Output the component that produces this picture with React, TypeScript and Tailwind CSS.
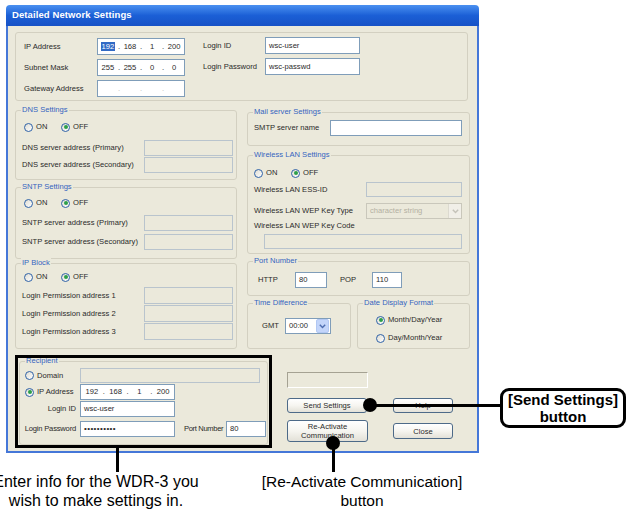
import React from 'react';

interface BoxProps {
  className?: string;
  disabled?: boolean;
  children?: React.ReactNode;
}

const Box = ({ className = '', disabled = false, children }: BoxProps) => (
  <div
    className={`flex items-center px-[3px] border whitespace-nowrap overflow-hidden ${
      disabled ? 'bg-[#ebe9db] border-[#b9c4cd]' : 'bg-white border-[#7f9db9]'
    } ${className}`}
  >
    {children}
  </div>
);

const IpBox = ({ parts, className = '', selectFirst = false, faint = false }: { parts: string[]; className?: string; selectFirst?: boolean; faint?: boolean }) => (
  <div className={`flex items-center bg-white border border-[#7f9db9] ${faint ? 'text-[#b8b8b8]' : ''} ${className}`}>
    {parts.map((p, i) => (
      <React.Fragment key={i}>
        {i > 0 && <span>.</span>}
        <span className="flex-1 text-center">
          <span className={i === 0 && selectFirst ? 'bg-[#316ac5] text-white px-[1px]' : ''}>{p}</span>
        </span>
      </React.Fragment>
    ))}
  </div>
);

const Radio = ({ checked = false, label, className = '' }: { checked?: boolean; label: string; className?: string }) => (
  <div className={`flex items-center gap-[3px] h-[10px] ${className}`}>
    <span className="w-[9px] h-[9px] shrink-0 rounded-full border border-[#2f62a8] bg-gradient-to-br from-[#dedcd2] to-white flex items-center justify-center">
      {checked && <span className="w-[4px] h-[4px] rounded-full bg-[#2c9f4a]" />}
    </span>
    <span>{label}</span>
  </div>
);

const Group = ({ title, className = '', children }: { title?: string; className?: string; children?: React.ReactNode }) => (
  <div className={`relative border border-[#d3d0c1] rounded-[3px] ${className}`}>
    {title && (
      <span className="absolute left-[5px] top-[-6px] px-[1px] bg-[#ebe9db] text-[#3564c0] leading-[10px] whitespace-nowrap">
        {title}
      </span>
    )}
    {children}
  </div>
);

const Btn = ({ className = '', children }: { className?: string; children?: React.ReactNode }) => (
  <div
    className={`flex items-center justify-center text-center leading-[9px] border border-[#4d6a88] rounded-[3px] bg-gradient-to-b from-white via-[#f6f5f0] to-[#e3e1d8] ${className}`}
  >
    {children}
  </div>
);

const Chevron = ({ color }: { color: string }) => (
  <svg width="7" height="5" viewBox="0 0 7 5">
    <path d="M0.8 0.8 L3.5 3.6 L6.2 0.8" fill="none" stroke={color} strokeWidth="1.4" />
  </svg>
);

const OnOff = () => (
  <div className="flex">
    <Radio label="ON" className="w-[37px]" />
    <Radio label="OFF" checked />
  </div>
);

const FieldRow = ({ label, h = 'h-[16px]' }: { label: string; h?: string }) => (
  <div className={`flex items-center ${h}`}>
    <span className="w-[122px] whitespace-nowrap">{label}</span>
    <Box disabled className={`w-[89px] ${h}`} />
  </div>
);

export default function App() {
  return (
    <div className="relative w-[629px] h-[514px] bg-white overflow-hidden text-[7.6px] text-[#2a2a2a] font-['Liberation_Sans',Arial,sans-serif]">
      <div className="ml-[6px] pt-[5px] w-[473px]">
        {/* title bar */}
        <div className="h-[21px] rounded-t-[4px] bg-gradient-to-b from-[#4a90f0] via-[#1b5fd6] to-[#1752c6] flex items-center pl-[6px]">
          <span className="text-white font-bold text-[9.5px] tracking-[0.1px]">Detailed Network Settings</span>
        </div>

        {/* body */}
        <div className="h-[427px] bg-[#ebe9db] border-x-2 border-b-2 border-[#4577d8] pl-[7px] pt-[6px]">
          {/* top group */}
          <Group className="w-[453px] h-[69px]">
            <div className="flex pl-[8px] pt-[5px]">
              <div className="flex flex-col gap-[4px]">
                <div className="flex items-center h-[17px]">
                  <span className="w-[73px]">IP Address</span>
                  <IpBox parts={['192', '168', '1', '200']} selectFirst className="w-[88px] h-[17px]" />
                </div>
                <div className="flex items-center h-[17px]">
                  <span className="w-[73px]">Subnet Mask</span>
                  <IpBox parts={['255', '255', '0', '0']} className="w-[88px] h-[17px]" />
                </div>
                <div className="flex items-center h-[17px]">
                  <span className="w-[73px]">Gateway Address</span>
                  <IpBox parts={['', '', '', '']} faint className="w-[88px] h-[17px]" />
                </div>
              </div>
              <div className="ml-[18px] -mt-[1px] flex flex-col gap-[4px]">
                <div className="flex items-center h-[17px]">
                  <span className="w-[62px]">Login ID</span>
                  <Box className="w-[95px] h-[17px]">wsc-user</Box>
                </div>
                <div className="flex items-center h-[17px]">
                  <span className="w-[62px] whitespace-nowrap">Login Password</span>
                  <Box className="w-[95px] h-[17px]">wsc-passwd</Box>
                </div>
              </div>
            </div>
          </Group>

          {/* two columns */}
          <div className="flex gap-[10px] items-start">
            {/* left column */}
            <div className="w-[222px] mt-[9px] flex flex-col">
              <Group title="DNS Settings" className="h-[70px]">
                <div className="pt-[11px] pl-[8px]">
                  <OnOff />
                </div>
                <div className="mt-[8px] pl-[6px] flex flex-col gap-[1px]">
                  <FieldRow label="DNS server address (Primary)" />
                  <FieldRow label="DNS server address (Secondary)" />
                </div>
              </Group>
              <Group title="SNTP Settings" className="mt-[7px] h-[72px]">
                <div className="pt-[10px] pl-[8px]">
                  <OnOff />
                </div>
                <div className="mt-[7px] pl-[6px] flex flex-col gap-[3px]">
                  <FieldRow label="SNTP server address (Primary)" />
                  <FieldRow label="SNTP server address (Secondary)" />
                </div>
              </Group>
              <Group title="IP Block" className="mt-[4px] h-[86px]">
                <div className="pt-[8px] pl-[8px]">
                  <OnOff />
                </div>
                <div className="mt-[5px] pl-[6px] flex flex-col gap-[1px]">
                  <FieldRow label="Login Permission address 1" h="h-[17px]" />
                  <FieldRow label="Login Permission address 2" h="h-[17px]" />
                  <FieldRow label="Login Permission address 3" h="h-[17px]" />
                </div>
              </Group>
            </div>

            {/* right column */}
            <div className="w-[223px] mt-[11px] flex flex-col">
              <Group title="Mail server Settings" className="h-[34px]">
                <div className="pt-[7px] pl-[6px] flex items-center h-[23px]">
                  <span className="w-[76px]">SMTP server name</span>
                  <Box className="w-[132px] h-[16px]" />
                </div>
              </Group>
              <Group title="Wireless LAN Settings" className="mt-[9px] h-[99px]">
                <div className="pt-[12px] pl-[6px]">
                  <OnOff />
                  <div className="mt-[4px] flex items-center h-[15px]">
                    <span className="w-[112px]">Wireless LAN ESS-ID</span>
                    <Box disabled className="w-[96px] h-[15px]" />
                  </div>
                  <div className="mt-[6px] flex items-center h-[16px]">
                    <span className="w-[112px] whitespace-nowrap">Wireless LAN WEP Key Type</span>
                    <div className="w-[96px] h-[16px] border border-[#c9c7bb] bg-[#ebe9db] flex items-center text-[#b3b0a2]">
                      <span className="flex-1 pl-[3px] whitespace-nowrap">character string</span>
                      <span className="w-[13px] h-[14px] border-l border-[#dcdad0] bg-[#f1efe8] flex items-center justify-center">
                        <Chevron color="#c4c2b8" />
                      </span>
                    </div>
                  </div>
                  <div className="mt-[1px] h-[12px] flex items-center">Wireless LAN WEP Key Code</div>
                  <Box disabled className="mt-[2px] ml-[10px] w-[198px] h-[15px]" />
                </div>
              </Group>
              <Group title="Port Number" className="mt-[7px] h-[35px]">
                <div className="pt-[10px] pl-[10px] flex items-center">
                  <span className="w-[37px]">HTTP</span>
                  <Box className="w-[32px] h-[16px]">80</Box>
                  <span className="ml-[13px] w-[32px]">POP</span>
                  <Box className="w-[30px] h-[16px]">110</Box>
                </div>
              </Group>
              <div className="mt-[7px] flex gap-[6px]">
                <Group title="Time Difference" className="w-[104px] h-[46px]">
                  <div className="pt-[14px] pl-[14px] flex items-center">
                    <span className="w-[23px]">GMT</span>
                    <div className="w-[46px] h-[16px] border border-[#7f9db9] bg-white flex items-center">
                      <span className="flex-1 pl-[3px]">00:00</span>
                      <span className="w-[13px] h-[14px] mr-[1px] rounded-[2px] bg-[#c3d5fa] border border-[#b2c8f3] flex items-center justify-center">
                        <Chevron color="#4d6db0" />
                      </span>
                    </div>
                  </div>
                </Group>
                <Group title="Date Display Format" className="w-[113px] h-[46px]">
                  <div className="pt-[11px] pl-[18px] flex flex-col gap-[8px]">
                    <Radio label="Month/Day/Year" checked />
                    <Radio label="Day/Month/Year" />
                  </div>
                </Group>
              </div>
            </div>
          </div>

          {/* bottom row */}
          <div className="mt-[6px] flex items-start">
            <div className="w-[257px] h-[93px] border-[3px] border-black overflow-hidden">
              <Group title="Recipient" className="mt-[3px] mx-[1px] w-[249px] h-[84px]">
                <div className="pt-[6px] flex flex-col">
                  <div className="flex items-center h-[15px]">
                    <Radio label="Domain" className="w-[60px] pl-[5px]" />
                    <Box disabled className="w-[180px] h-[15px]" />
                  </div>
                  <div className="mt-[1px] flex items-center h-[16px]">
                    <Radio label="IP Address" checked className="w-[60px] pl-[5px]" />
                    <IpBox parts={['192', '168', '1', '200']} className="w-[95px] h-[16px]" />
                  </div>
                  <div className="mt-[1px] flex items-center h-[16px]">
                    <span className="w-[60px] text-right pr-[4px]">Login ID</span>
                    <Box className="w-[95px] h-[16px]">wsc-user</Box>
                  </div>
                  <div className="mt-[4px] flex items-center h-[16px]">
                    <span className="w-[60px] text-right pr-[4px] whitespace-nowrap tracking-[-0.2px]">Login Password</span>
                    <Box className="w-[95px] h-[16px] text-[8px] tracking-[0.4px]">••••••••••</Box>
                    <span className="ml-[9px] w-[42px] whitespace-nowrap tracking-[-0.35px]">Port Number</span>
                    <Box className="w-[40px] h-[16px]">80</Box>
                  </div>
                </div>
              </Group>
            </div>

            <div className="ml-[15px] pt-[17px]">
              <div className="w-[81px] h-[16px] border border-[#a5a293] border-b-white border-r-white bg-[#ebe9db]" />
              <div className="mt-[10px] flex gap-[26px]">
                <Btn className="w-[80px] h-[15px]">Send Settings</Btn>
                <Btn className="w-[60px] h-[15px]">Help</Btn>
              </div>
              <div className="mt-[7px] flex gap-[25px] items-center">
                <Btn className="w-[81px] h-[22px]">
                  Re-Activate
                  <br />
                  Communication
                </Btn>
                <Btn className="w-[60px] h-[16px]">Close</Btn>
              </div>
            </div>
          </div>
        </div>
      </div>

      {/* captions */}
      <div className="flex mt-[19px] leading-[19px] text-black">
        <div className="w-[220px] -ml-[14px] text-center whitespace-nowrap text-[16px]">
          Enter info for the WDR-3 you
          <br />
          wish to make settings in.
        </div>
        <div className="ml-[46px] w-[220px] text-center whitespace-nowrap text-[15.5px]">
          [Re-Activate Communication]
          <br />
          button
        </div>
      </div>

      {/* callout lines and dots */}
      <div className="absolute left-[116px] top-[448px] w-[3px] h-[24px] bg-black" />
      <div className="absolute left-[370px] top-[404px] w-[131px] h-[3px] bg-black" />
      <div className="absolute left-[363px] top-[398px] w-[14px] h-[14px] rounded-full bg-black" />
      <div className="absolute left-[332px] top-[443px] w-[3px] h-[29px] bg-black" />
      <div className="absolute left-[326px] top-[436px] w-[14px] h-[14px] rounded-full bg-black" />
      <div className="absolute left-[500px] top-[388px] w-[126px] h-[40px] border-[3px] border-black rounded-[9px] bg-white flex flex-col items-center justify-center font-bold text-[15px] leading-[17px] text-black">
        <span>[Send Settings]</span>
        <span>button</span>
      </div>
    </div>
  );
}
